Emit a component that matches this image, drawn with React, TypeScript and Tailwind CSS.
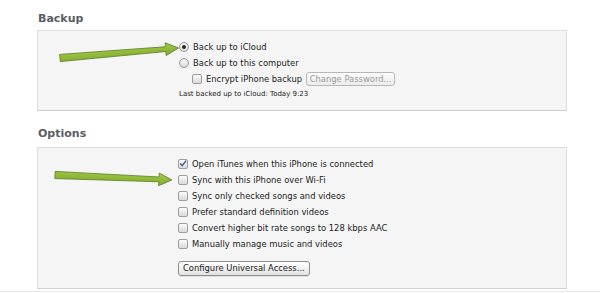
import React from "react";

const font = { fontFamily: '"DejaVu Sans", "Liberation Sans", sans-serif' };

function Radio({ checked }: { checked?: boolean }) {
  return (
    <span className="mr-[4px] flex h-[10px] w-[10px] shrink-0 items-center justify-center rounded-full border border-[#9a9a9a] bg-gradient-to-b from-[#ffffff] to-[#d9d9d9] shadow-[inset_0_1px_1px_rgba(0,0,0,0.08)]">
      {checked && <span className="h-[4px] w-[4px] rounded-full bg-[#2a2a2a]" />}
    </span>
  );
}

function Checkbox({ checked }: { checked?: boolean }) {
  return (
    <span className="mr-[4px] flex h-[10px] w-[10px] shrink-0 items-center justify-center rounded-[2px] border border-[#9d9d9d] bg-gradient-to-b from-[#fbfbfb] to-[#dadada]">
      {checked && (
        <svg width="9" height="9" viewBox="0 0 9 9" className="-mt-[1px]">
          <path d="M1.5 4.6 L3.6 7 L8 1.2" fill="none" stroke="#3c5a8c" strokeWidth="1.6" />
        </svg>
      )}
    </span>
  );
}

function Row({ children }: { children: React.ReactNode }) {
  return <div className="flex h-[16px] items-center text-[8.4px] text-[#1a1a1a]">{children}</div>;
}

function Arrow({ x, y, len, angle }: { x: number; y: number; len: number; angle: number }) {
  const h = len - 13;
  return (
    <polygon
      transform={`translate(${x} ${y}) rotate(${angle})`}
      points={`0,-3.6 ${h},-2.4 ${h},-6.4 ${len},0 ${h},6.4 ${h},2.4 0,3.6`}
      fill="url(#arrowFill)"
      stroke="#5f7d22"
      strokeWidth="0.8"
      strokeLinejoin="round"
    />
  );
}

export default function App() {
  const options = [
    { label: "Open iTunes when this iPhone is connected", checked: true },
    { label: "Sync with this iPhone over Wi-Fi" },
    { label: "Sync only checked songs and videos" },
    { label: "Prefer standard definition videos" },
    { label: "Convert higher bit rate songs to 128 kbps AAC" },
    { label: "Manually manage music and videos" },
  ];

  return (
    <div className="relative h-[293px] w-[600px] overflow-hidden bg-white" style={font}>
      <div className="flex h-[292px] flex-col border-b border-[#e6e6e6] pl-[37px] pt-[12px]">
        {/* Backup */}
        <h2 className="h-[18px] pl-[1px] text-[11px] font-bold leading-[14px] text-[#585d64]">Backup</h2>
        <div className="flex h-[81px] w-[530px] flex-col border border-[#dedede] border-b-[#cfcfcf] bg-[#f5f5f5] pl-[141px] pt-[8px]">
          <Row>
            <Radio checked />
            Back up to iCloud
          </Row>
          <Row>
            <Radio />
            Back up to this computer
          </Row>
          <div className="flex h-[16px] items-center pl-[13px] text-[8.4px] text-[#1a1a1a]">
            <Checkbox />
            <span className="mr-[4px]">Encrypt iPhone backup</span>
            <span className="flex h-[14px] w-[89px] items-center justify-center rounded-[3px] border border-[#b8b8b8] bg-gradient-to-b from-[#fdfdfd] to-[#ececec] text-[8.4px] text-[#9a9a9a]">
              Change Password...
            </span>
          </div>
          <div className="flex h-[14px] items-center text-[7px] text-[#1a1a1a]">
            Last backed up to iCloud: Today 9:23
          </div>
        </div>

        {/* Options */}
        <h2 className="mt-[16px] h-[20px] pl-[1px] text-[11px] font-bold leading-[14px] text-[#585d64]">Options</h2>
        <div className="flex h-[142px] w-[530px] flex-col border border-[#dedede] border-b-[#cfcfcf] bg-[#f5f5f5] pl-[140px] pt-[8px]">
          {options.map((o) => (
            <Row key={o.label}>
              <Checkbox checked={o.checked} />
              {o.label}
            </Row>
          ))}
          <div className="mt-[9px] flex">
            <span className="flex h-[15px] items-center rounded-[3px] border border-[#8e8e8e] bg-gradient-to-b from-[#ffffff] to-[#e2e2e2] px-[4px] text-[8.4px] text-[#1a1a1a] shadow-[0_1px_0_rgba(0,0,0,0.08)]">
              Configure Universal Access...
            </span>
          </div>
        </div>
      </div>

      {/* annotation arrows */}
      <svg className="pointer-events-none absolute left-0 top-0" width="600" height="293">
        <defs>
          <linearGradient id="arrowFill" x1="0" y1="0" x2="0" y2="1">
            <stop offset="0" stopColor="#a3cc45" />
            <stop offset="1" stopColor="#7ea82e" />
          </linearGradient>
        </defs>
        <Arrow x={60} y={58} len={119} angle={-4.8} />
        <Arrow x={55} y={175} len={117} angle={2.4} />
      </svg>
    </div>
  );
}
